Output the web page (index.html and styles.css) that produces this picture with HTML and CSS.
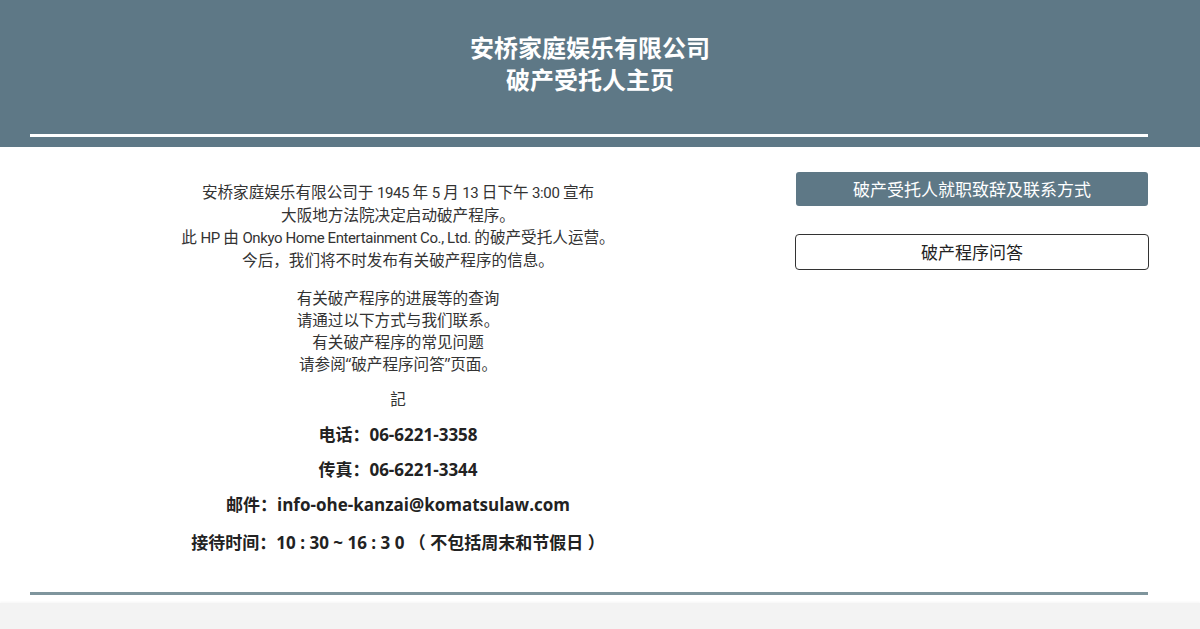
FILE: index.html
```html
<!DOCTYPE html>
<html lang="zh-CN">

<head>
    <meta http-equiv="Content-Type" content="text/html; charset=UTF-8" />
    <title>安桥家庭娱乐有限公司 破产受托人主页</title>
    <link rel="stylesheet" href="styles.css">
</head>

<body>
    <header class="siteHeader">
        <h1 class="siteTitle">安桥家庭娱乐有限公司<br>破产受托人主页</h1>
        <div class="headerRule"></div>
    </header>

    <main class="mainContainer">
        <section class="noticeColumn">
            <p class="noticeText firstText">
                安桥家庭娱乐有限公司于 <span class="latinNarrow">1945</span> 年 <span class="latinNarrow">5</span> 月 <span class="latinNarrow">13</span> 日下午 <span class="latinNarrow">3:00</span> 宣布<br>
                大阪地方法院决定启动破产程序。<br>
                此 <span class="latinNarrow">HP</span> 由 <span class="latinNarrow">Onkyo Home Entertainment Co., Ltd.</span> 的破产受托人运营。<br>
                今后，我们将不时发布有关破产程序的信息。
            </p>
            <p class="noticeText secondText">
                有关破产程序的进展等的查询<br>
                请通过以下方式与我们联系。<br>
                有关破产程序的常见问题<br>
                请参阅<span class="latinQuote">“</span>破产程序问答<span class="latinQuote">”</span>页面。
            </p>
            <p class="noticeText markText">記</p>
            <div class="contactList">
                <p class="contactLine">电话：06-6221-3358</p>
                <p class="contactLine">传真：06-6221-3344</p>
                <p class="contactLine">邮件：info-ohe-kanzai@komatsulaw.com</p>
                <p class="contactLine lastLine">接待时间：10 : 30 ~ 16 : 3 0 （ 不包括周末和节假日 ）</p>
            </div>
        </section>

        <nav class="linkColumn">
            <a class="linkButton primaryButton" href="#">破产受托人就职致辞及联系方式</a>
            <a class="linkButton outlineButton" href="#">破产程序问答</a>
        </nav>
    </main>

    <div class="footerRule"></div>
    <footer class="siteFooter"></footer>
</body>

</html>
```

FILE: styles.css
```css
html, body {
    margin: 0;
    padding: 0;
}
body {
    background: #ffffff;
    color: #333333;
    font-family: "Open Sans", "Noto Sans CJK SC", sans-serif;
}

/* header band */
.siteHeader {
    background: #5e7886;
    padding: 31px 0 10px 0;
}
.siteTitle {
    margin: 0;
    padding-right: 20px;
    color: #ffffff;
    font-family: "Noto Sans CJK SC", sans-serif;
    font-size: 24px;
    font-weight: 700;
    line-height: 32px;
    text-align: center;
}
.headerRule {
    width: 1118px;
    height: 3px;
    margin: 39px 0 0 30px;
    background: #ffffff;
}

/* two columns */
.mainContainer {
    width: 1118px;
    margin-left: 30px;
    padding-top: 25px;
    display: grid;
    grid-template-columns: 736px 352px;
    gap: 30px;
}

.noticeColumn {
    text-align: center;
}
.noticeText {
    margin: 0;
    font-family: "Noto Sans CJK SC", sans-serif;
    font-size: 15.6px;
    color: #333333;
}
.latinQuote {
    font-family: "Open Sans", sans-serif;
    line-height: 1;
}
.latinNarrow {
    font-family: "Roboto", sans-serif;
    font-size: 15px;
    line-height: 1;
    letter-spacing: -0.4px;
}
.firstText {
    margin-top: 8px;
    line-height: 22.5px;
}
.secondText {
    margin-top: 16px;
    line-height: 22px;
}
.markText {
    margin-top: 13px;
    line-height: 22px;
}

.contactList {
    margin-top: 8px;
}
.contactLine {
    margin: 0;
    font-size: 17px;
    font-weight: 700;
    line-height: 35px;
    color: #222222;
}
.lastLine {
    margin-top: 3px;
}

.linkColumn {
    display: flex;
    flex-direction: column;
    gap: 28px;
}
.linkButton {
    display: block;
    text-align: center;
    text-decoration: none;
    font-family: "Noto Sans CJK SC", sans-serif;
    font-size: 17px;
}
.primaryButton {
    height: 34px;
    line-height: 34px;
    background: #5e7886;
    color: #ffffff;
    border-radius: 3px;
}
.outlineButton {
    height: 34px;
    line-height: 34px;
    margin: 0 -1px;
    border: 1px solid #333333;
    border-radius: 4px;
    color: #222222;
}

/* footer */
.footerRule {
    width: 1118px;
    height: 3px;
    margin: 32px 0 0 30px;
    background: #7f959d;
}
.siteFooter {
    margin-top: 8px;
    height: 40px;
    background: #f3f3f3;
    box-shadow: 0 -1px 2px rgba(0, 0, 0, 0.04);
}
```
